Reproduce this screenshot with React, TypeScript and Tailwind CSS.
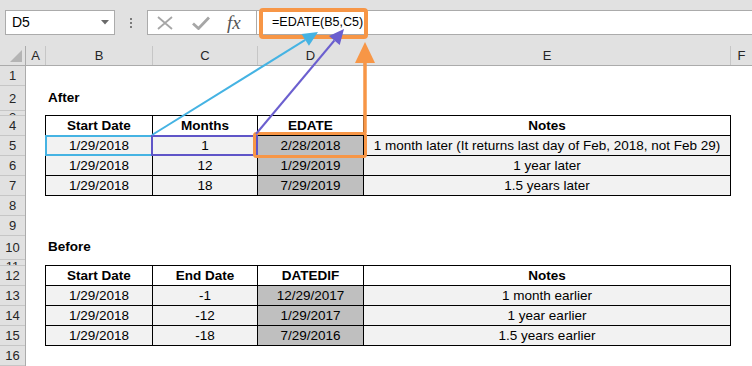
import React from 'react';

type RowHead = { n: number; h: string; small?: boolean };

const rowHeads: RowHead[] = [
  { n: 1, h: 'h-[20px]' },
  { n: 2, h: 'h-[25px]' },
  { n: 3, h: 'h-[5px]', small: true },
  { n: 4, h: 'h-[20px]' },
  { n: 5, h: 'h-[20px]' },
  { n: 6, h: 'h-[20px]' },
  { n: 7, h: 'h-[20px]' },
  { n: 8, h: 'h-[20px]' },
  { n: 9, h: 'h-[20px]' },
  { n: 10, h: 'h-[24px]' },
  { n: 11, h: 'h-[6px]', small: true },
  { n: 12, h: 'h-[20px]' },
  { n: 13, h: 'h-[20px]' },
  { n: 14, h: 'h-[20px]' },
  { n: 15, h: 'h-[20px]' },
  { n: 16, h: 'h-[20px]' },
];

const colHeads = [
  { label: 'A', w: 'w-[20px]' },
  { label: 'B', w: 'w-[107px]' },
  { label: 'C', w: 'w-[105px]' },
  { label: 'D', w: 'w-[106px]' },
  { label: 'E', w: 'w-[367px]' },
];

const afterRows = [
  ['1/29/2018', '1', '2/28/2018', '1 month later (It returns last day of Feb, 2018, not Feb 29)'],
  ['1/29/2018', '12', '1/29/2019', '1 year later'],
  ['1/29/2018', '18', '7/29/2019', '1.5 years later'],
];

const beforeRows = [
  ['1/29/2018', '-1', '12/29/2017', '1 month earlier'],
  ['1/29/2018', '-12', '1/29/2017', '1 year earlier'],
  ['1/29/2018', '-18', '7/29/2016', '1.5 years earlier'],
];

function DataTable({ header, rows }: { header: string[]; rows: string[][] }) {
  return (
    <div className="ml-[19px] grid w-[686px] grid-cols-[106px_104px_105px_366px] gap-px bg-black p-px text-[13.5px] text-black">
      {header.map((h) => (
        <div key={h} className="flex h-[19px] items-center justify-center bg-white font-bold leading-[19px]">
          {h}
        </div>
      ))}
      {rows.map((r, i) =>
        r.map((c, j) => (
          <div
            key={`${i}-${j}`}
            className={`flex h-[19px] items-center justify-center leading-[19px] ${j === 2 ? 'bg-[#bfbfbf]' : 'bg-[#f2f2f2]'}`}
          >
            {c}
          </div>
        ))
      )}
    </div>
  );
}

function head(x1: number, y1: number, x2: number, y2: number, len: number, half: number) {
  const dx = x2 - x1;
  const dy = y2 - y1;
  const d = Math.sqrt(dx * dx + dy * dy);
  const ux = dx / d;
  const uy = dy / d;
  const bx = x2 - ux * len;
  const by = y2 - uy * len;
  return {
    base: [bx, by],
    points: `${x2},${y2} ${bx - uy * half},${by + ux * half} ${bx + uy * half},${by - ux * half}`,
  };
}

function Overlay() {
  const blue = head(152, 135, 318, 32, 15, 7);
  const purple = head(256, 134, 344, 29, 15, 7);
  return (
    <svg className="pointer-events-none absolute left-0 top-0" width={752} height={366}>
      <rect x={46} y={136} width={106} height={19} fill="none" stroke="#45b3e3" strokeWidth={2} />
      <rect x={152} y={136} width={105} height={19} fill="none" stroke="#5f55c8" strokeWidth={2} />
      <rect x={261} y={10} width={105} height={27} rx={2} fill="none" stroke="#f79646" strokeWidth={4} />
      <rect x={254.5} y={133.5} width={111} height={23} rx={2} fill="none" stroke="#f79646" strokeWidth={3} />

      <line x1={152} y1={135} x2={blue.base[0]} y2={blue.base[1]} stroke="#45b3e3" strokeWidth={2} />
      <polygon points={blue.points} fill="#45b3e3" />

      <line x1={256} y1={134} x2={purple.base[0]} y2={purple.base[1]} stroke="#6b5fcf" strokeWidth={2} />
      <polygon points={purple.points} fill="#6b5fcf" />

      <line x1={365} y1={133} x2={365} y2={62} stroke="#f79646" strokeWidth={3.5} />
      <polygon points="365,42 355,63 375,63" fill="#f79646" />
    </svg>
  );
}

export default function App() {
  return (
    <div className="relative h-[366px] w-[752px] overflow-hidden bg-white font-['Liberation_Sans',Arial,sans-serif]">
      {/* formula bar */}
      <div className="flex h-[46px] items-start bg-[#e1e1e1] pt-[10px]">
        <div className="ml-[5px] flex h-[25px] w-[110px] items-center justify-between border border-[#ababab] bg-white pl-[6px] pr-[5px]">
          <span className="text-[14px] text-black">D5</span>
          <svg width="8" height="5" viewBox="0 0 8 5">
            <polygon points="0,0 8,0 4,4.5" fill="#6a6a6a" />
          </svg>
        </div>
        <div className="flex h-[25px] w-[32px] flex-col items-center justify-center gap-[2px]">
          <span className="block h-[2px] w-[2px] bg-[#7a7a7a]" />
          <span className="block h-[2px] w-[2px] bg-[#7a7a7a]" />
          <span className="block h-[2px] w-[2px] bg-[#7a7a7a]" />
        </div>
        <div className="flex h-[25px] w-[110px] items-center border border-[#ababab] bg-white pl-[9px]">
          <svg width="16" height="14" viewBox="0 0 16 14">
            <path d="M1 1 L15 13 M15 1 L1 13" stroke="#a6a6a6" strokeWidth="1.8" fill="none" />
          </svg>
          <svg className="ml-[19px]" width="18" height="14" viewBox="0 0 18 14">
            <path d="M1 7.5 L6.5 12.5 L17 1.5" stroke="#a6a6a6" strokeWidth="2.8" fill="none" />
          </svg>
          <span className="ml-[17px] font-['Liberation_Serif',serif] text-[19px] italic leading-none text-[#555]">fx</span>
        </div>
        <div className="flex h-[25px] flex-1 items-center border-y border-[#ababab] bg-white pl-[15px] text-[12.5px] text-black">
          =EDATE(B5,C5)
        </div>
      </div>

      {/* column headers */}
      <div className="flex h-[20px] border-b border-[#ababab] bg-[#e1e1e1] text-[13px] text-[#262626]">
        <div className="relative w-[26px] border-r border-[#ababab]">
          <svg className="absolute left-[10px] top-[4px]" width="12" height="12" viewBox="0 0 12 12">
            <polygon points="12,0 12,12 0,12" fill="#b4b4b4" />
          </svg>
        </div>
        {colHeads.map((c) => (
          <div key={c.label} className={`${c.w} flex items-center justify-center border-r border-[#c6c6c6]`}>
            {c.label}
          </div>
        ))}
        <div className="flex flex-1 items-center justify-center">F</div>
      </div>

      {/* sheet body */}
      <div className="flex">
        <div className="w-[26px] shrink-0 border-r border-[#ababab] bg-[#e1e1e1] text-[13px] text-[#262626]">
          {rowHeads.map((r) => (
            <div
              key={r.n}
              className={`${r.h} flex justify-center overflow-hidden border-b border-[#c6c6c6] leading-none ${r.small ? 'items-start' : 'items-center'}`}
            >
              {r.n}
            </div>
          ))}
        </div>
        <div className="flex-1">
          <div className="h-[20px]" />
          <div className="flex h-[25px] items-end pb-[5px] pl-[22px] text-[13.5px] font-bold leading-[16px]">After</div>
          <div className="h-[4px]" />
          <DataTable header={['Start Date', 'Months', 'EDATE', 'Notes']} rows={afterRows} />
          <div className="h-[40px]" />
          <div className="flex h-[24px] items-end pb-[5px] pl-[22px] text-[13.5px] font-bold leading-[16px]">Before</div>
          <div className="h-[5px]" />
          <DataTable header={['Start Date', 'End Date', 'DATEDIF', 'Notes']} rows={beforeRows} />
        </div>
      </div>

      <Overlay />
    </div>
  );
}
